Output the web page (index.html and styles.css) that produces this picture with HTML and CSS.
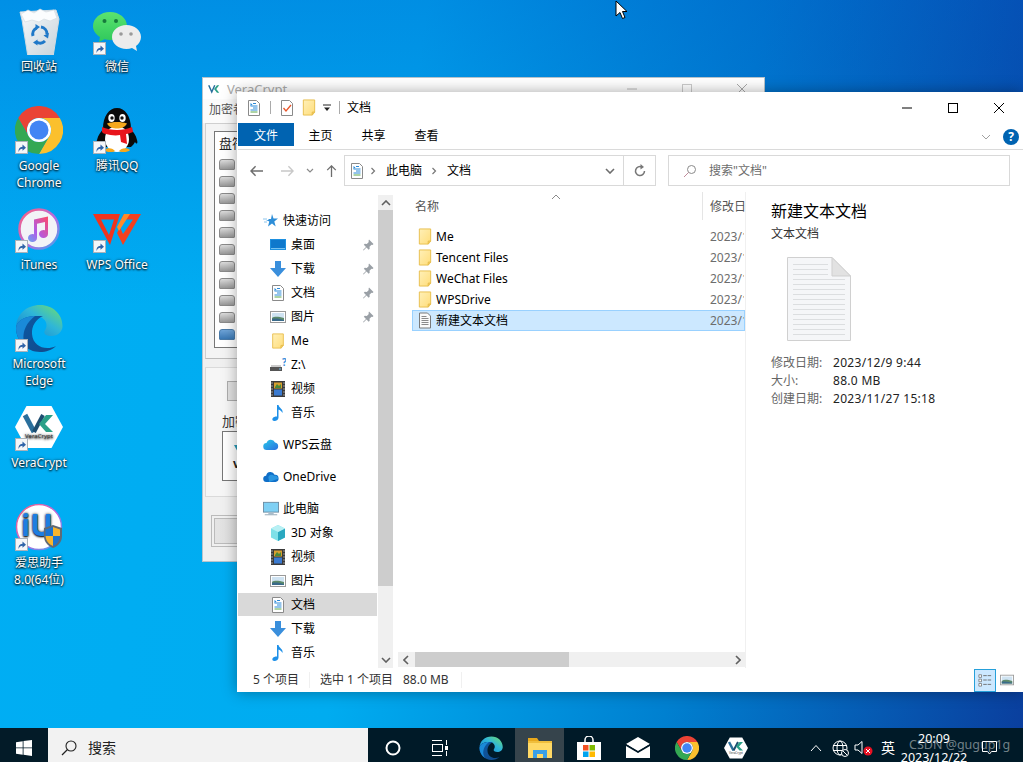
FILE: index.html
```html
<!DOCTYPE html>
<html lang="zh-CN">
<head>
<meta charset="UTF-8">
<meta name="viewport" content="width=device-width, initial-scale=1.0">
<link rel="stylesheet" href="styles.css">
<title>文档</title></head><body>
<svg class="sprite" xmlns="http://www.w3.org/2000/svg">
<defs>
<linearGradient id="g-folder" x1="0" y1="0" x2="1" y2="1"><stop offset="0" stop-color="#fff0b8"/><stop offset="1" stop-color="#ffdd7a"/></linearGradient>
<linearGradient id="g-bin" x1="0" y1="0" x2="1" y2="1"><stop offset="0" stop-color="#f8fafc"/><stop offset="1" stop-color="#c6d2da"/></linearGradient>
<linearGradient id="g-ring" x1="0" y1="0" x2="1" y2="1"><stop offset="0" stop-color="#ff5f7a"/><stop offset=".55" stop-color="#b46be0"/><stop offset="1" stop-color="#3fa6ee"/></linearGradient>
<linearGradient id="g-note" x1="1" y1="0" x2="0" y2="1"><stop offset="0" stop-color="#ff4a68"/><stop offset=".6" stop-color="#b05be6"/><stop offset="1" stop-color="#6aa6f0"/></linearGradient>
<linearGradient id="g-edge" x1="0" y1="1" x2="1" y2="0"><stop offset="0" stop-color="#0f7fd0"/><stop offset=".55" stop-color="#2fb6d8"/><stop offset="1" stop-color="#72e06a"/></linearGradient>
<linearGradient id="g-edge2" x1="0" y1="0" x2="1" y2="1"><stop offset="0" stop-color="#0c59a4"/><stop offset="1" stop-color="#114a8b"/></linearGradient>
<linearGradient id="g-wechat" x1="0" y1="0" x2="0" y2="1"><stop offset="0" stop-color="#5be36e"/><stop offset="1" stop-color="#2fc85c"/></linearGradient>
<linearGradient id="g-cloud" x1="0" y1="0" x2="1" y2="1"><stop offset="0" stop-color="#28c8e8"/><stop offset="1" stop-color="#2a6fe0"/></linearGradient>
<symbol id="i-shortcut" viewBox="0 0 13 13"><rect x=".5" y=".5" width="12" height="12" fill="#f4f6f8" stroke="#aab2ba"/><path d="M3.500 11c0-3.500 1-5 4-5.300V3.500L11 6.700 7.500 9.800V7.800C5.500 7.800 4.500 9 3.500 11z" fill="#2f63a8"/></symbol>
<symbol id="i-bin" viewBox="0 1 48 48"><path d="M5 6L41 4 44 13 38 51H13L7 14z" fill="url(#g-bin)" stroke="#d2dbe1"/><path d="M6 8l7-4 6 3 6-4 6 3 8-2 3 8-7 3-6-2-5 3-7-2-7 2z" fill="#fbfdfe" stroke="#d5dde3" stroke-width=".7"/><g fill="none" stroke="#1f78c8" stroke-width="3"><path d="M18 30a7 7 0 0 1 3.500-8"/><path d="M26 21a7 7 0 0 1 6 7"/><path d="M30 35a7 7 0 0 1-8.500 1"/></g><path d="M20.500 18l4.500 3-4.500 3.500zM34 27l-1 5.500-4.500-3zM22.500 39.500l-4.500-3 4.500-3z" fill="#1f78c8"/></symbol>
<symbol id="i-wechat" viewBox="0 1 48 48"><path d="M17 6c9.400 0 17 6.300 17 14s-7.600 14-17 14c-2 0-3.800-.3-5.500-.8L6 36l1-5C2.700 28.500 0 24.500 0 20 0 12.300 7.600 6 17 6z" fill="url(#g-wechat)"/><circle cx="11.500" cy="15" r="2" fill="#167a3c"/><circle cx="23" cy="15" r="2" fill="#167a3c"/><path d="M33.500 19C41.500 19 48 24.400 48 31c0 3.600-2 6.800-5 9l1 5-5-3c-1.700.5-3.500 1-5.500 1C25.500 43 19 37.600 19 31s6.500-12 14.500-12z" fill="#ececec"/><circle cx="28" cy="28" r="1.800" fill="#9a9a9a"/><circle cx="38" cy="28" r="1.800" fill="#9a9a9a"/></symbol>
<symbol id="i-chrome" viewBox="0 0 48 48"><path d="M3.200 12A24 24 0 0 1 44.800 12H24A12 12 0 0 0 13.600 30z" fill="#ea4335"/><path d="M24 12H44.800A24 24 0 0 1 24 48L34.400 30A12 12 0 0 0 24 12z" fill="#fbc02d"/><path d="M3.200 12L13.600 30A12 12 0 0 0 34.400 30L24 48A24 24 0 0 1 3.200 12z" fill="#34a853"/><circle cx="24" cy="24" r="12" fill="#fff"/><circle cx="24" cy="24" r="9.500" fill="#4285f4"/></symbol>
<symbol id="i-qq" viewBox="0 0 48 48"><path d="M6 36c-2 3-3 1-2-2 1-5 4-8 6-11C10 10 16 2 24 2s14 8 14 21c2 3 5 6 6 11 1 3 0 5-2 2-1 2-3 4-4 5H10c-1-1-3-3-4-5z" fill="#0a0a0a"/><ellipse cx="24" cy="33" rx="12" ry="13" fill="#fff"/><path d="M9 21c9 4 21 4 30 0l1 5c-3 1-5 2-7 2l1 10-6-2-1-7c-5 1-10 0-14-1-2 0-3-1-4-2z" fill="#e8141c"/><ellipse cx="18.500" cy="12" rx="3.200" ry="4" fill="#fff"/><ellipse cx="29.500" cy="12" rx="3.200" ry="4" fill="#fff"/><circle cx="19" cy="12" r="1.700" fill="#111"/><circle cx="29" cy="12" r="1.700" fill="#111"/><path d="M14 17.500c6-2 14-2 20 0-2 4-6 5-10 5s-8-1-10-5z" fill="#f5a81c"/><path d="M11 44c4-3 9-2 11 1 0 1-9 2-11-1zM26 45c2-3 8-4 11-1-2 3-11 2-11 1z" fill="#f5a81c"/></symbol>
<symbol id="i-itunes" viewBox="0 0 48 48"><circle cx="24" cy="24" r="19.500" fill="#f2f3f7" stroke="url(#g-ring)" stroke-width="2.500"/><path d="M19 14.500L33 11.500V29a4.500 4 0 1 1-3-3.800V17L22 18.700V33a4.500 4 0 1 1-3-3.800z" fill="url(#g-note)"/></symbol>
<symbol id="i-wps" viewBox="0 0 48 48"><path d="M0 9H27L17 40zM8 14.500L16 30 21 14.500z" fill="#f0341e" fill-rule="evenodd"/><path d="M31 9H48L30 40 24 28 27 22 30 29 40 14.500H28z" fill="#f4401e"/><path d="M31 9H37L26 26 24 22z" fill="#ff8a2a"/></symbol>
<symbol id="i-edge" viewBox="0 0 48 48"><path d="M1 24C1 10 12 1 25 1c13 0 22.500 9.500 22.500 21 0 6-5 10-11 10-5 0-8-2-7-5 1-2 2-3 2-6 0-5-5-9-11-9C9 12 1 17 1 24z" fill="url(#g-edge)"/><path d="M20 12C10 12 1 17 1 24c0 13 11 24 24 24 6 0 12-2 16-6-10 5-23 1-24-12-.5-8 4-15 11-18z" fill="url(#g-edge2)"/><path d="M20 12C10 12 1 17 1 24c0 8 4 15 11 20-6-8-5-22 8-32z" fill="#1a8ad8"/></symbol>
<symbol id="i-vera" viewBox="0 0 48 48"><path d="M11.500 3H36.500L48 24 36.500 45H11.500L0 24z" fill="#fff"/><path d="M10 12l9 17" stroke="#2a6f9c" stroke-width="5" fill="none"/><path d="M28 12l-9 17" stroke="#1d4d70" stroke-width="4" fill="none"/><path d="M38 12H31L24 21l7 8h7l-8-8z" fill="#2aa088"/><text class="vera-text" x="24" y="35" text-anchor="middle">VeraCrypt</text></symbol>
<symbol id="i-i4" viewBox="0 0 48 48"><circle cx="24" cy="24" r="22.500" fill="#fff" stroke="url(#g-ring)" stroke-width="1.500"/><text class="i4-text" x="22" y="33" text-anchor="middle">iU</text><path d="M38 22l9 3v8c0 6-4 10-9 12-5-2-9-6-9-12v-8z" fill="#5f6a76"/><path d="M38 24v9h-7.500v-6.500z" fill="#1c74d0"/><path d="M30.500 33H38v10c-4-1.500-7-5-7.500-10z" fill="#f8b52e"/><path d="M38 33h7c-.5 5-3 8.500-7 10z" fill="#1c74d0"/><path d="M38 24l7 2.500V33h-7z" fill="#f8b52e"/></symbol>
<symbol id="i-doc" viewBox="0 0 16 16"><path d="M2.500 .5h8l3 3v12h-11z" fill="#fff" stroke="#8a8a8a"/><path d="M7 3.500h3M4.500 6h7M7 8h4.500M4.500 10h7" stroke="#2a8ad8" fill="none"/><path d="M4.500 12h7" stroke="#5aa84c"/><path d="M4.500 3l2 1.500-2 1.500z" fill="#2a8ad8"/></symbol>
<symbol id="i-folder" viewBox="0 0 14 18"><path d="M1 1H13V14H10.500V17H1z" fill="url(#g-folder)" stroke="#e8be4c"/><path d="M10.500 14H13L10.500 17z" fill="#f6d470" stroke="#e8be4c"/></symbol>
<symbol id="i-check" viewBox="0 0 16 16"><path d="M2.500 .5h8l3 3v12h-11z" fill="#fff" stroke="#8a8a8a"/><path d="M4.500 8l2.500 3 5-6" stroke="#e8552a" stroke-width="1.300" fill="none"/></symbol>
<symbol id="i-star" viewBox="0 0 16 16"><path d="M9 1l1.500 4.500H15l-3.700 3 1.400 5L9 10.500 5 13.500l1.300-5-3.300-1.500H6L5 6H1l4 0 3 0z" fill="#2d8ed8"/><path d="M0 6h4M1 9h3" stroke="#8cc5ee"/></symbol>
<symbol id="i-desktop" viewBox="0 0 16 16"><rect x="0" y="2" width="16" height="11" fill="#1e90e0"/><rect x="1" y="3" width="14" height="8.500" fill="#0f78cc"/><path d="M1 11.500h14" stroke="#74c0f0"/></symbol>
<symbol id="i-down" viewBox="0 0 16 16"><path d="M5 0h6v7h5l-8 9-8-9h5z" fill="#3a8fdc"/></symbol>
<symbol id="i-pic" viewBox="0 0 16 16"><rect x=".5" y="2.500" width="15" height="11" fill="#fff" stroke="#9a9a9a"/><rect x="2" y="4" width="12" height="8" fill="#cfe3f2"/><path d="M2 9c3-2 7-1 12 0v3H2z" fill="#5d8a6a"/><path d="M2 10c4-1 8 0 12 1v1H2z" fill="#3a6a8a"/></symbol>
<symbol id="i-video" viewBox="0 0 16 16"><rect x="1" y="0" width="14" height="16" fill="#3a3a3a"/><path d="M2 1.500v1M2 4.500v1M2 7.500v1M2 10.500v1M2 13.500v1M14 1.500v1M14 4.500v1M14 7.500v1M14 10.500v1M14 13.500v1" stroke="#fff"/><rect x="4" y="1.500" width="8" height="6" fill="#d8a030"/><rect x="4" y="8.500" width="8" height="6" fill="#3a7ad0"/><path d="M5 6l2-3 2 2 2-2v4H5z" fill="#4a8a3a"/></symbol>
<symbol id="i-music" viewBox="0 0 16 16"><path d="M7 0h1.500c.5 3 5 4 4 8-1-2-2.500-3-4-3.500V12.500C8.500 15 6 16 4.500 16 2.500 16 2 14.500 2.500 13.500 3.200 12 5 11.500 7 11.500z" fill="#1e90e8"/></symbol>
<symbol id="i-drive" viewBox="0 0 16 16"><path d="M0 10h12v4H0z" fill="#555"/><path d="M1 9h10" stroke="#999"/><circle cx="10" cy="12" r=".8" fill="#7cf"/><text class="drive-q" x="12" y="9">?</text></symbol>
<symbol id="i-cloud" viewBox="0 0 16 16"><path d="M4 13a3.500 3.500 0 0 1-.5-7A4.500 4.500 0 0 1 12 5.500 3.800 3.800 0 0 1 12 13z" fill="url(#g-cloud)"/></symbol>
<symbol id="i-onedrive" viewBox="0 0 18 16"><path d="M4 13.500a3.500 3.500 0 0 1-.5-7A5 5 0 0 1 13 5.500a4 4 0 0 1 1 8z" fill="#0f6fc8"/><path d="M6 8a4 4 0 0 1 6.500-1.500 3.500 3.500 0 0 1 4.500 3.500L7 13.500z" fill="#2a96e0"/></symbol>
<symbol id="i-pc" viewBox="0 0 18 16"><rect x=".5" y=".5" width="17" height="11" fill="#7fd0f4" stroke="#6a8aa0"/><path d="M6 12h6v2H6z" fill="#a8bccb"/><path d="M2 14.500h14" stroke="#8aa0b0"/></symbol>
<symbol id="i-cube" viewBox="0 0 16 16"><path d="M8 0l7 3.500v9L8 16l-7-3.500v-9z" fill="#7fe0e8"/><path d="M8 7l7-3.500v9L8 16z" fill="#2aa8c0"/><path d="M8 0l7 3.500L8 7 1 3.500z" fill="#b8f0f4"/></symbol>
<symbol id="i-pin" viewBox="0 0 12 12"><path d="M7 .5l4.500 4.500-1 1-1-.3-2 2 .2 2-1 1-2.200-2.200-3 3-.5-.5 3-3L1.800 5.800l1-1 2 .2 2-2-.3-1z" fill="#9aa0a6"/></symbol>
<symbol id="i-txt" viewBox="0 0 14 16"><path d="M1.500 .5h8l3 3v12h-11z" fill="#fafafa" stroke="#7a7a7a"/><path d="M3.500 4h5M3.500 6h7M3.500 8h7M3.500 10h7M3.500 12h7" stroke="#8a8a8a"/></symbol>
<symbol id="i-explorer" viewBox="0 0 24 24"><path d="M0 2h9l2 3h-11z" fill="#e8a81c"/><path d="M0 5h24v17H0z" fill="#ffd966"/><path d="M5 14h14v8h-4v-4H9v4H5z" fill="#3aa0e8"/><path d="M0 5h24v2H0z" fill="#f0be3c"/></symbol>
<symbol id="i-store" viewBox="0 0 24 24"><path d="M8 6V4a4 4 0 0 1 8 0v2" stroke="#fff" fill="none" stroke-width="1.500"/><path d="M0 6h24v18H0z" fill="#fff"/><rect x="6" y="9" width="5.500" height="5.500" fill="#f25022"/><rect x="12.500" y="9" width="5.500" height="5.500" fill="#7fba00"/><rect x="6" y="15.500" width="5.500" height="5.500" fill="#00a4ef"/><rect x="12.500" y="15.500" width="5.500" height="5.500" fill="#ffb900"/></symbol>
<symbol id="i-mail" viewBox="0 0 24 24"><path d="M0 8L12 1l12 7-12 7z" fill="#fff"/><path d="M0 10l12 7 12-7v12H0z" fill="#fff"/><path d="M0 8.500l12 7.500 12-7.500" stroke="#001828" fill="none"/></symbol>
</defs>
</svg>

<div class="desktop">
  <div class="icons">
    <div class="icon"><svg class="icon-img"><use href="#i-bin"/></svg><span>回收站</span></div>
    <div class="icon"><svg class="icon-img"><use href="#i-wechat"/></svg><svg class="lnk"><use href="#i-shortcut"/></svg><span>微信</span></div>
    <div class="icon"><svg class="icon-img"><use href="#i-chrome"/></svg><svg class="lnk"><use href="#i-shortcut"/></svg><span>Google Chrome</span></div>
    <div class="icon"><svg class="icon-img"><use href="#i-qq"/></svg><svg class="lnk"><use href="#i-shortcut"/></svg><span>腾讯QQ</span></div>
    <div class="icon"><svg class="icon-img"><use href="#i-itunes"/></svg><svg class="lnk"><use href="#i-shortcut"/></svg><span>iTunes</span></div>
    <div class="icon"><svg class="icon-img"><use href="#i-wps"/></svg><svg class="lnk"><use href="#i-shortcut"/></svg><span>WPS Office</span></div>
    <div class="icon first"><svg class="icon-img"><use href="#i-edge"/></svg><svg class="lnk"><use href="#i-shortcut"/></svg><span>Microsoft Edge</span></div>
    <div class="icon first"><svg class="icon-img"><use href="#i-vera"/></svg><svg class="lnk"><use href="#i-shortcut"/></svg><span>VeraCrypt</span></div>
    <div class="icon first"><svg class="icon-img"><use href="#i-i4"/></svg><svg class="lnk"><use href="#i-shortcut"/></svg><span>爱思助手<br>8.0(64位)</span></div>
  </div>

  <div class="vc-window">
    <div class="vc-title">
      <svg class="vc-logo" viewBox="0 0 16 16"><path d="M1 3l4 9 4-9" stroke="#2a6f9c" stroke-width="2" fill="none"/><path d="M15 3h-3L8 8l4 5h3l-4-5z" fill="#2aa088"/></svg>
      <span>VeraCrypt</span>
      <span class="vc-ctl">
        <svg width="10" height="10"><path d="M0 5h10" stroke="#bbb"/></svg>
        <svg width="10" height="10"><rect x=".5" y=".5" width="9" height="9" fill="none" stroke="#ccc"/></svg>
        <svg width="10" height="10"><path d="M0 0l10 10M10 0L0 10" stroke="#aaa"/></svg>
      </span>
    </div>
    <div class="vc-menu">加密卷</div>
    <div class="vc-group">
      <div class="vc-list">
        <div class="vc-head">盘符</div>
        <div class="vc-drive"></div><div class="vc-drive"></div><div class="vc-drive"></div><div class="vc-drive"></div>
        <div class="vc-drive"></div><div class="vc-drive"></div><div class="vc-drive"></div><div class="vc-drive"></div>
        <div class="vc-drive"></div><div class="vc-drive"></div><div class="vc-drive blue"></div>
      </div>
    </div>
    <div class="vc-group2">
      <div class="vc-btn"></div>
      <div class="vc-legend">加密卷</div>
      <div class="vc-box">
        <div class="vc-logo-box">
          <svg width="14" height="14" viewBox="0 0 14 14"><path d="M1 1h12L7 12z" fill="#2a9ab8"/></svg>
          <b>ve</b>
        </div>
      </div>
    </div>
    <div class="vc-bottom"><div class="vc-bottom-btn"></div></div>
  </div>

  <div class="explorer">
    <div class="ex-title">
      <svg class="ic16 qa-doc"><use href="#i-doc"/></svg>
      <i class="qa-sep"></i>
      <svg class="ic16 qa-check"><use href="#i-check"/></svg>
      <svg class="qa-folder"><use href="#i-folder"/></svg>
      <svg class="qa-drop" viewBox="0 0 8 8"><path d="M0 1h8" stroke="#222"/><path d="M1 3.500h6L4 7z" fill="#222"/></svg>
      <i class="qa-sep second"></i>
      <span class="ex-name">文档</span>
      <div class="ex-ctl">
        <svg viewBox="0 0 10 10"><path d="M0 5h10" stroke="#000"/></svg>
        <svg viewBox="0 0 10 10"><rect x=".5" y=".5" width="9" height="9" fill="none" stroke="#000"/></svg>
        <svg viewBox="0 0 10 10"><path d="M0 0l10 10M10 0L0 10" stroke="#000"/></svg>
      </div>
    </div>
    <div class="ex-tabs">
      <div class="tab active">文件</div>
      <div class="tab">主页</div>
      <div class="tab">共享</div>
      <div class="tab">查看</div>
      <svg class="ribbon-down" viewBox="0 0 10 6"><path d="M1 1l4 4 4-4" stroke="#a0a0a0" fill="none"/></svg>
      <div class="help">?</div>
    </div>
    <div class="ex-address">
      <div class="nav-btns">
        <svg viewBox="0 0 14 12"><path d="M6 1L1 6l5 5M1 6h13" stroke="#6d6d6d" stroke-width="1.500" fill="none"/></svg>
        <svg viewBox="0 0 14 12"><path d="M8 1l5 5-5 5M13 6H0" stroke="#c8c8c8" stroke-width="1.500" fill="none"/></svg>
        <svg class="small" viewBox="0 0 8 6"><path d="M1 1l3 3 3-3" stroke="#8a8a8a" stroke-width="1.200" fill="none"/></svg>
        <svg viewBox="0 0 12 14"><path d="M1 6l5-5 5 5M6 1v13" stroke="#6d6d6d" stroke-width="1.500" fill="none"/></svg>
      </div>
      <div class="addr">
        <svg class="ic16"><use href="#i-doc"/></svg>
        <svg class="crumb" viewBox="0 0 6 8"><path d="M1.500 1l3 3-3 3" stroke="#777" stroke-width="1.200" fill="none"/></svg>
        <span>此电脑</span>
        <svg class="crumb" viewBox="0 0 6 8"><path d="M1.500 1l3 3-3 3" stroke="#777" stroke-width="1.200" fill="none"/></svg>
        <span>文档</span>
        <svg class="addr-drop" viewBox="0 0 10 6"><path d="M1 1l4 4 4-4" stroke="#6d6d6d" stroke-width="1.600" fill="none"/></svg>
        <div class="addr-refresh"><svg width="14" height="14" viewBox="0 0 14 14"><path d="M11.500 7a4.500 4.500 0 1 1-2.500-4" stroke="#777" stroke-width="1.500" fill="none"/><path d="M7.500 0l3.500 3-3.500 2.500z" fill="#777"/></svg></div>
      </div>
      <div class="search">
        <svg width="14" height="14" viewBox="0 0 14 14"><circle cx="8.500" cy="5.500" r="4" stroke="#8a8a8a" fill="none"/><path d="M5.500 8.500L1 13" stroke="#c08a9a"/></svg>
        <span>搜索"文档"</span>
      </div>
    </div>
    <div class="ex-main">
      <div class="nav-pane">
        <div class="nav-row top"><svg class="ic16"><use href="#i-star"/></svg>快速访问</div>
        <div class="nav-row"><svg class="ic16"><use href="#i-desktop"/></svg>桌面<svg class="pin"><use href="#i-pin"/></svg></div>
        <div class="nav-row"><svg class="ic16"><use href="#i-down"/></svg>下载<svg class="pin"><use href="#i-pin"/></svg></div>
        <div class="nav-row"><svg class="ic16"><use href="#i-doc"/></svg>文档<svg class="pin"><use href="#i-pin"/></svg></div>
        <div class="nav-row"><svg class="ic16"><use href="#i-pic"/></svg>图片<svg class="pin"><use href="#i-pin"/></svg></div>
        <div class="nav-row"><svg class="ic16"><use href="#i-folder"/></svg>Me</div>
        <div class="nav-row"><svg class="ic16"><use href="#i-drive"/></svg>Z:\</div>
        <div class="nav-row"><svg class="ic16"><use href="#i-video"/></svg>视频</div>
        <div class="nav-row"><svg class="ic16"><use href="#i-music"/></svg>音乐</div>
        <div class="nav-row top group"><svg class="ic16"><use href="#i-cloud"/></svg>WPS云盘</div>
        <div class="nav-row top group"><svg class="ic16"><use href="#i-onedrive"/></svg>OneDrive</div>
        <div class="nav-row top group"><svg class="ic16"><use href="#i-pc"/></svg>此电脑</div>
        <div class="nav-row"><svg class="ic16"><use href="#i-cube"/></svg>3D 对象</div>
        <div class="nav-row"><svg class="ic16"><use href="#i-video"/></svg>视频</div>
        <div class="nav-row"><svg class="ic16"><use href="#i-pic"/></svg>图片</div>
        <div class="nav-row selected"><svg class="ic16"><use href="#i-doc"/></svg>文档</div>
        <div class="nav-row"><svg class="ic16"><use href="#i-down"/></svg>下载</div>
        <div class="nav-row"><svg class="ic16"><use href="#i-music"/></svg>音乐</div>
      </div>
      <div class="v-scroll">
        <div class="arrow"><svg viewBox="0 0 10 6"><path d="M1 5l4-4 4 4" stroke="#606060" stroke-width="1.600" fill="none"/></svg></div>
        <div class="v-thumb"></div>
        <div class="arrow low"><svg viewBox="0 0 10 6"><path d="M1 1l4 4 4-4" stroke="#606060" stroke-width="1.600" fill="none"/></svg></div>
      </div>
      <div class="list">
        <div class="list-head">
          <div class="col-name">名称<svg class="sort" viewBox="0 0 10 6"><path d="M1 5l4-4 4 4" stroke="#8a8a8a" fill="none"/></svg></div>
          <div class="col-date">修改日期</div>
        </div>
        <div class="list-body">
          <div class="file-row"><div class="file-name"><svg class="fic"><use href="#i-folder"/></svg>Me</div><div class="file-date">2023/12/9 9:44</div></div>
          <div class="file-row"><div class="file-name"><svg class="fic"><use href="#i-folder"/></svg>Tencent Files</div><div class="file-date">2023/12/9 9:44</div></div>
          <div class="file-row"><div class="file-name"><svg class="fic"><use href="#i-folder"/></svg>WeChat Files</div><div class="file-date">2023/12/9 9:44</div></div>
          <div class="file-row"><div class="file-name"><svg class="fic"><use href="#i-folder"/></svg>WPSDrive</div><div class="file-date">2023/12/9 9:44</div></div>
          <div class="file-row selected"><div class="file-name"><svg class="fic"><use href="#i-txt"/></svg>新建文本文档</div><div class="file-date">2023/12/9 9:44</div></div>
        </div>
        <div class="h-scroll">
          <svg class="h-arrow" viewBox="0 0 6 10"><path d="M5 1L1 5l4 4" stroke="#606060" stroke-width="1.600" fill="none"/></svg>
          <div class="h-thumb"></div>
          <svg class="h-arrow end" viewBox="0 0 6 10"><path d="M1 1l4 4-4 4" stroke="#606060" stroke-width="1.600" fill="none"/></svg>
        </div>
      </div>
      <div class="preview">
        <div class="pv-title">新建文本文档</div>
        <div class="pv-sub">文本文档</div>
        <svg class="pv-doc" viewBox="0 0 64 84">
          <path d="M.5 .5H45L63.500 19V83.500H.5z" fill="#f5f6f8" stroke="#d0d0d0"/>
          <path d="M45 .5V19H63.500z" fill="#e2e2e2" stroke="#cfcfcf"/>
          <path d="M6 7.500h35M6 12.500h35M6 17.500h35M6 22.500h52M6 27.500h52M6 32.500h52M6 37.500h52M6 42.500h52M6 47.500h52M6 52.500h52M6 57.500h52M6 62.500h52M6 67.500h52M6 72.500h52M6 77.500h52" stroke="#dcdee0"/>
        </svg>
        <div class="pv-rows">
          <div class="pv-row"><span class="pv-label">修改日期:</span><span class="pv-value">2023/12/9 9:44</span></div>
          <div class="pv-row"><span class="pv-label">大小:</span><span class="pv-value">88.0 MB</span></div>
          <div class="pv-row"><span class="pv-label">创建日期:</span><span class="pv-value">2023/11/27 15:18</span></div>
        </div>
      </div>
    </div>
    <div class="ex-status">
      <span class="st-a">5 个项目</span><i></i>
      <span class="st-b">选中 1 个项目</span>
      <span class="st-c">88.0 MB</span><i></i>
      <div class="view-btns">
        <div class="view-btn on"><svg viewBox="0 0 16 16"><path d="M1 2h3v3H1zM1 7h3v3H1zM1 12h3v3H1z" fill="#fff" stroke="#666" stroke-width=".8"/><path d="M6 3h4M11 3h4M6 8h4M11 8h4M6 13h4M11 13h4" stroke="#666"/></svg></div>
        <div class="view-btn"><svg><use href="#i-pic"/></svg></div>
      </div>
    </div>
  </div>

  <svg class="cursor" width="13" height="20" viewBox="0 0 13 20"><path d="M1 1v15l4-3.500 2.500 6 2.500-1-2.500-6H12z" fill="#fff" stroke="#000"/></svg>
</div>

<div class="taskbar">
  <div class="start"><svg width="16" height="16" viewBox="0 0 16 16"><path d="M0 2.200l6.700-1V7.500H0zM7.500 1.100L16 0v7.500H7.500zM0 8.300h6.700v6.500L0 13.800zM7.500 8.300H16V16l-8.500-1.200z" fill="#fff"/></svg></div>
  <div class="tb-search">
    <svg width="16" height="16" viewBox="0 0 16 16"><circle cx="10" cy="6" r="5" stroke="#222" fill="none" stroke-width="1.100"/><path d="M6.500 9.500L1 15" stroke="#222" stroke-width="1.200"/></svg>
    <span>搜索</span>
  </div>
  <div class="tb-item"><svg width="16" height="16" viewBox="0 0 16 16"><circle cx="8" cy="8" r="6.500" stroke="#fff" stroke-width="2" fill="none"/></svg></div>
  <div class="tb-item"><svg class="tb-view" width="16" height="16" viewBox="0 0 16 16"><path d="M0 .5h10M0 15.500h10" stroke="#fff"/><rect x=".5" y="4.500" width="10" height="7" fill="none" stroke="#fff"/><path d="M14.500 0v5M14.500 11v5" stroke="#fff"/><rect x="13" y="6" width="3" height="4" fill="#fff"/></svg></div>
  <div class="tb-item"><svg class="tb-ic"><use href="#i-edge"/></svg></div>
  <div class="tb-item active"><svg class="tb-ic"><use href="#i-explorer"/></svg></div>
  <div class="tb-item"><svg class="tb-ic"><use href="#i-store"/></svg></div>
  <div class="tb-item"><svg class="tb-ic"><use href="#i-mail"/></svg></div>
  <div class="tb-item"><svg class="tb-ic"><use href="#i-chrome"/></svg></div>
  <div class="tb-item"><svg class="tb-ic"><use href="#i-vera"/></svg></div>
  <div class="tray">
    <svg class="tr-up" width="12" height="8" viewBox="0 0 12 8"><path d="M1 7l5-5.500L11 7" stroke="#fff" fill="none"/></svg>
    <svg class="tr-globe" width="17" height="17" viewBox="0 0 17 17"><circle cx="8" cy="8" r="7" stroke="#fff" fill="none"/><ellipse cx="8" cy="8" rx="3" ry="7" stroke="#fff" fill="none"/><path d="M1 5.500h14M1 10.500h14" stroke="#fff"/><circle cx="13" cy="13" r="3.500" fill="#001828" stroke="#fff"/><path d="M11 11l4 4" stroke="#fff"/></svg>
    <svg class="tr-vol" width="20" height="16" viewBox="0 0 20 16"><path d="M1 5h3l4-3.500v12L4 10H1z" stroke="#fff" fill="none"/><circle cx="14" cy="11" r="4.500" fill="#e81123"/><path d="M12 9l4 4M16 9l-4 4" stroke="#fff"/></svg>
    <span class="tr-ime">英</span>
    <div class="clock"><div>20:09</div><div>2023/12/22</div></div>
    <svg class="tr-note" width="15" height="14" viewBox="0 0 15 14"><path d="M.5 .5h14v10H9.500L7.500 13l-2-2.500H.5z" stroke="#fff" fill="none"/></svg>
  </div>
  <div class="watermark">CSDN @gugup1g</div>
</div>
</body></html>
```

FILE: styles.css
```css
* { box-sizing: border-box; }
html, body { margin: 0; padding: 0; height: 100%; overflow: hidden; }
body { font-family: "Noto Sans", "Noto Sans CJK SC", sans-serif; font-size: 12px; line-height: 18px; color: #000; }
.sprite { position: absolute; width: 0; height: 0; }
svg { display: block; flex: none; }

/* desktop */
.desktop { position: relative; height: 728px; overflow: hidden;
  background:
    linear-gradient(to bottom, rgba(0, 80, 200, .32), rgba(0, 80, 200, 0) 42%),
    linear-gradient(98deg, #00aef4 0%, #00acf0 38%, #0080d0 68%, #0a3f9e 100%); }
.icons { display: grid; grid-template-columns: 78px 78px; grid-template-rows: 99px 99px 99px 99px 100px 100px; padding-top: 7px; }
.icon { position: relative; display: flex; flex-direction: column; align-items: center; color: #fff; text-align: center; line-height: 17px; text-shadow: 0 1px 2px #000, 0 0 3px rgba(0,0,0,.7); }
.icon.first { grid-column: 1; }
.icon-img { width: 48px; height: 48px; margin-bottom: 3px; }
.icon span { width: 74px; }
.lnk { position: absolute; left: 15px; top: 35px; width: 13px; height: 13px; }
.vera-text { font-size: 6px; fill: #333; }
.i4-text { font-size: 30px; font-weight: 700; fill: #1e7ee0; font-family: "Noto Sans", sans-serif; }
.drive-q { font-size: 10px; font-weight: 700; fill: #3a8fdc; }
.cursor { position: absolute; left: 615px; top: 0; }

/* veracrypt behind */
.vc-window { position: absolute; left: 202px; top: 77px; width: 563px; height: 485px; background: #f0f0f0; border: 1px solid #b8c4cc; color: #555; overflow: hidden; }
.vc-title { display: flex; align-items: center; height: 21px; padding: 0 17px 0 5px; background: #fff; gap: 7px; font-size: 13px; color: #aaa; }
.vc-logo { width: 12px; height: 12px; }
.vc-ctl { display: flex; margin-left: auto; gap: 45px; }
.vc-menu { height: 24px; padding-left: 6px; background: #fbfbfb; line-height: 22px; }
.vc-group { margin: 0 2px; height: 236px; padding: 7px 0 10px 8px; border: 1px solid #cfcfcf; border-bottom-color: #bbb; background: #f4f4f4; }
.vc-list { height: 100%; background: #fff; border: 1px solid #777; padding: 2px 4px; color: #222; }
.vc-head { height: 25px; font-size: 13px; }
.vc-drive { width: 16px; height: 11px; margin-bottom: 6px; background: linear-gradient(#dcdcdc, #999); border: 1px solid #8a8a8a; border-radius: 3px 3px 1px 1px; }
.vc-drive.blue { background: linear-gradient(#6ea4d8, #3a78b4); border-color: #4a7aa8; }
.vc-group2 { margin: 8px 2px 0; height: 130px; padding: 13px 0 0 21px; border: 1px solid #dadada; background: #f6f6f6; }
.vc-btn { width: 60px; height: 20px; background: #e1e1e1; border: 1px solid #adadad; }
.vc-legend { margin: 11px 0 0 -5px; font-size: 13px; color: #333; }
.vc-box { margin-left: -5px; }
.vc-logo-box { width: 60px; height: 50px; margin-top: 1px; padding: 12px 0 0 10px; background: #fff; border: 1px solid #777; color: #222; }
.vc-logo-box b { display: block; line-height: 12px; }
.vc-bottom { margin: 18px 0 0 8px; width: 100px; height: 32px; padding: 2px; border: 1px solid #bbb; }
.vc-bottom-btn { height: 100%; border: 1px solid #bbb; background: linear-gradient(to right, #e4e4e4, #cdcdcd); }

/* explorer */
.explorer { position: absolute; left: 237px; top: 92px; width: 786px; height: 600px; display: flex; flex-direction: column; background: #fff; padding-left: 1px; box-shadow: 0 0 14px rgba(0, 0, 0, .35); }
.ex-title { display: flex; align-items: center; height: 31px; flex: none; }
.ic16 { width: 16px; height: 16px; }
.qa-doc { margin-left: 8px; }
.qa-sep { width: 1px; height: 13px; background: #aaa; margin-left: 8px; }
.qa-sep.second { margin-left: 8px; }
.qa-check { margin-left: 8px; }
.qa-folder { width: 14px; height: 17px; margin-left: 7px; }
.qa-drop { width: 8px; height: 8px; margin-left: 7px; }
.ex-name { margin-left: 7px; font-size: 12px; }
.ex-ctl { display: flex; margin-left: auto; padding-right: 19px; gap: 36px; }
.ex-ctl svg { width: 10px; height: 10px; }
.ex-tabs { display: flex; align-items: flex-start; height: 27px; flex: none; border-bottom: 1px solid #dadada; }
.tab { width: 53px; height: 23px; line-height: 26px; text-align: center; }
.tab.active { width: 56px; background: #0063b1; color: #fff; }
.ribbon-down { width: 10px; height: 6px; margin: 11px 0 0 auto; }
.help { width: 16px; height: 16px; margin: 6px 4px 0 12px; border-radius: 50%; background: #0063b1; color: #fff; font-weight: 700; font-size: 12px; line-height: 16px; text-align: center; }
.ex-address { display: flex; height: 42px; flex: none; padding-top: 5px; }
.nav-btns { display: flex; align-items: center; width: 106px; height: 31px; padding-left: 12px; }
.nav-btns svg { width: 13px; height: 12px; margin-right: 18px; }
.nav-btns svg.small { width: 8px; height: 6px; margin-right: 11px; margin-left: -6px; }
.addr { display: flex; align-items: center; width: 312px; height: 31px; border: 1px solid #d9d9d9; padding-left: 4px; }
.crumb { width: 6px; height: 8px; margin: 0 10px 0 5px; }
.addr span + .crumb { margin-left: 9px; }
.addr-drop { width: 10px; height: 6px; margin-left: auto; margin-right: 8px; }
.addr-refresh { display: flex; align-items: center; justify-content: center; width: 32px; height: 100%; border-left: 1px solid #d9d9d9; }
.search { display: flex; align-items: center; width: 342px; height: 31px; margin-left: 12px; border: 1px solid #d9d9d9; padding-left: 14px; gap: 12px; color: #6d6d6d; }
.ex-main { display: flex; height: 476px; flex: none; overflow: hidden; }
.nav-pane { width: 140px; padding-top: 17px; flex: none; color: #000; }
.nav-row { display: flex; align-items: center; height: 24px; padding-left: 32px; padding-right: 4px; gap: 5px; white-space: nowrap; }
.nav-row.top { padding-left: 25px; gap: 4px; }
.nav-row.group { margin-top: 8px; }
.nav-row.selected { background: #d9d9d9; margin-right: 1px; height: 23px; margin-bottom: 1px; }
.pin { width: 12px; height: 12px; margin-left: auto; }
.v-scroll { display: flex; flex-direction: column; width: 15px; margin-top: 3px; background: #f0f0f0; }
.arrow { display: flex; align-items: center; justify-content: center; height: 15px; flex: none; }
.arrow svg { width: 10px; height: 6px; }
.arrow.low { margin-top: auto; margin-bottom: 1px; }
.v-thumb { height: 376px; background: #cdcdcd; }
.list { display: flex; flex-direction: column; width: 348px; margin-left: 5px; flex: none; border-right: 1px solid #f0f0f0; }
.list-head { display: flex; height: 34px; flex: none; color: #555; }
.col-name { display: flex; width: 305px; height: 28px; padding: 5px 0 0 17px; border-right: 1px solid #e5e5e5; }
.col-name, .col-date { line-height: 20px; }
.sort { width: 10px; height: 6px; margin: -3px 0 0 112px; }
.col-date { flex: 1; padding: 5px 0 0 7px; white-space: nowrap; overflow: hidden; color: #555; }
.list-body { flex: 1; padding-left: 14px; }
.file-row { display: grid; grid-template-columns: 297px 1fr; width: 333px; height: 21px; border: 1px solid transparent; align-items: center; overflow: hidden; }
.file-row.selected { background: #cce8ff; border-color: #99d1ff; }
.file-name { display: flex; align-items: center; padding-left: 5px; gap: 4px; white-space: nowrap; }
.fic { width: 14px; height: 17px; }
.file-date { color: #6d6d6d; white-space: nowrap; overflow: hidden; }
.h-scroll { display: flex; align-items: center; height: 15px; margin-bottom: 1px; width: 347px; flex: none; background: #f0f0f0; }
.h-arrow { width: 6px; height: 10px; margin: 0 6px 0 5px; }
.h-arrow.end { margin: 0 4px 0 auto; }
.h-thumb { width: 154px; height: 100%; background: #cdcdcd; }
.preview { flex: 1; padding: 8px 0 0 25px; }
.pv-title { font-size: 16px; line-height: 22px; }
.pv-sub { margin-top: 3px; line-height: 18px; color: #333; }
.pv-doc { width: 64px; height: 84px; margin: 14px 0 0 16px; }
.pv-rows { margin-top: 13px; color: #222; }
.pv-row { display: flex; height: 18px; }
.pv-label { width: 62px; color: #666; }
.pv-value { letter-spacing: .3px; }
.ex-status { display: flex; align-items: center; height: 24px; flex: none; color: #333; padding-left: 15px; white-space: nowrap; }
.ex-status i { width: 1px; height: 16px; background: #f0f0f0; }
.st-a { width: 56px; }
.st-b { margin-left: 10px; width: 83px; }
.st-c { width: 58px; }
.view-btns { display: flex; margin-left: auto; padding-right: 9px; gap: 4px; align-items: center; }
.view-btn { display: flex; align-items: center; justify-content: center; width: 14px; height: 23px; }
.view-btn svg { width: 14px; height: 14px; }
.view-btn.on { width: 22px; background: #cce8ff; border: 1px solid #26a0da; }

/* taskbar */
.taskbar { position: relative; display: flex; align-items: center; height: 40px; background: #001a28; color: #fff; overflow: hidden; }
.start { display: flex; align-items: center; justify-content: center; width: 48px; height: 100%; background: #031b28; }
.tb-search { display: flex; align-items: center; width: 320px; height: 100%; background: #f2f2f2; color: #222; padding-left: 13px; gap: 11px; font-size: 14px; }
.tb-item { display: flex; align-items: center; justify-content: center; width: 49px; height: 100%; }
.tb-item.active { background: #36444c; }
.tb-ic { width: 24px; height: 24px; }
.tb-view { margin-right: 4px; }
.tray { display: flex; align-items: center; flex: 1; height: 100%; padding-left: 50px; }
.tr-up { margin-right: 10px; }
.tr-globe { margin-right: 5px; }
.tr-vol { margin-right: 7px; }
.tr-ime { font-size: 14px; width: 24px; }
.clock { width: 70px; margin: 1px 0 0 -6px; text-align: center; font-size: 12.5px; line-height: 19px; align-self: flex-start; }
.clock div { height: 19px; white-space: nowrap; }
.tr-note { margin-left: 13px; }
.watermark { position: absolute; left: 909px; top: 8px; font-size: 12.5px; color: rgba(255, 255, 255, .45); white-space: nowrap; line-height: 18px; }
```
